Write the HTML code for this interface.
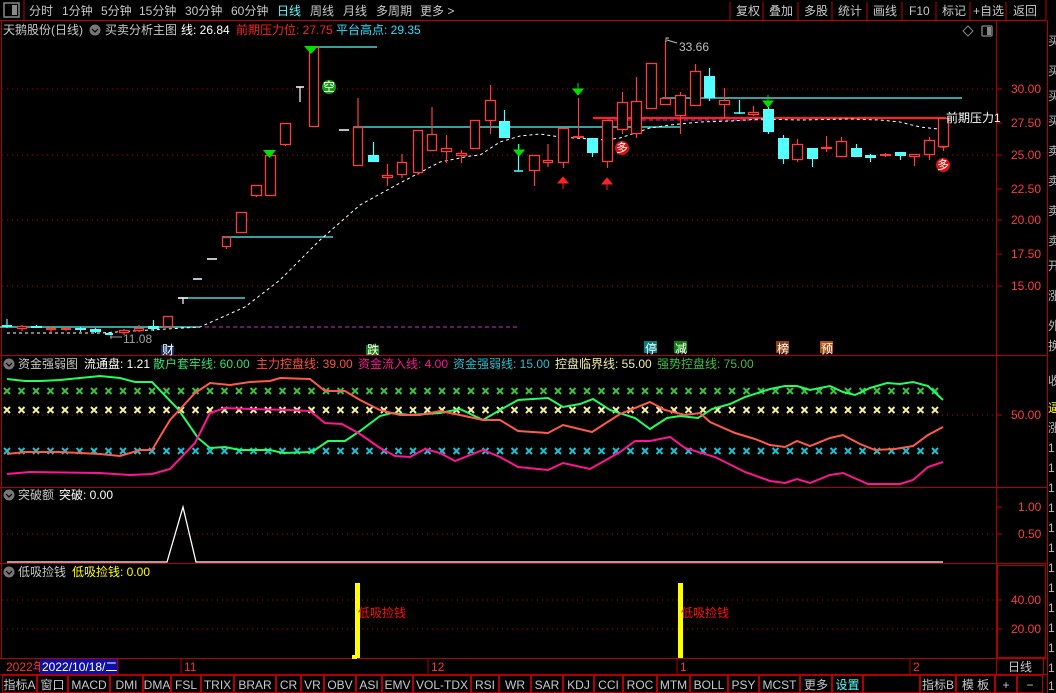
<!DOCTYPE html>
<html><head><meta charset="utf-8"><style>
body{margin:0;background:#000;width:1056px;height:693px;overflow:hidden;font-family:"Liberation Sans","Noto Sans CJK SC",sans-serif;}
svg{position:absolute;left:0;top:0}
text{font-family:"Liberation Sans","Noto Sans CJK SC",sans-serif;font-size:12px}
</style></head><body>
<svg id="s" width="1056" height="693" xmlns="http://www.w3.org/2000/svg">
<rect width="1056" height="693" fill="#000"/>
<!-- top bar -->
<rect x="4" y="3" width="15" height="14" fill="none" stroke="#888" stroke-width="1.5"/><rect x="12" y="5" width="5" height="10" fill="#888"/>
<line x1="24" y1="0" x2="24" y2="20" stroke="#c00000"/>
<g fill="#c8c8c8" font-size="12">
<text x="29" y="15">分时</text><text x="62" y="15">1分钟</text><text x="101" y="15">5分钟</text><text x="139" y="15">15分钟</text><text x="185" y="15">30分钟</text><text x="231" y="15">60分钟</text>
<text x="277" y="15" fill="#54ffff">日线</text><text x="310" y="15">周线</text><text x="343" y="15">月线</text><text x="376" y="15">多周期</text><text x="420" y="15">更多 &gt;</text>
<text x="736" y="15">复权</text><text x="769" y="15">叠加</text><text x="804" y="15">多股</text><text x="838" y="15">统计</text><text x="873" y="15">画线</text><text x="909" y="15">F10</text><text x="942" y="15">标记</text><text x="973" y="15">+自选</text><text x="1013" y="15">返回</text>
</g>
<g stroke="#c00000"><line x1="730" y1="2" x2="730" y2="20"/><line x1="763" y1="2" x2="763" y2="20"/><line x1="798" y1="2" x2="798" y2="20"/><line x1="832" y1="2" x2="832" y2="20"/><line x1="867" y1="2" x2="867" y2="20"/><line x1="902" y1="2" x2="902" y2="20"/><line x1="936" y1="2" x2="936" y2="20"/><line x1="970" y1="2" x2="970" y2="20"/><line x1="1006" y1="2" x2="1006" y2="20"/><line x1="1046" y1="0" x2="1046" y2="20"/></g>
<line x1="0" y1="20.5" x2="1046" y2="20.5" stroke="#c00000"/>
<!-- frame lines -->
<g stroke="#b00000" fill="none">
<line x1="1.5" y1="20" x2="1.5" y2="658"/>
<line x1="996.5" y1="20" x2="996.5" y2="658"/>
<line x1="1047.5" y1="20" x2="1047.5" y2="693"/>
<line x1="0" y1="355.5" x2="1047" y2="355.5"/>
<line x1="0" y1="487.5" x2="1047" y2="487.5"/>
<line x1="0" y1="563.5" x2="1047" y2="563.5"/>
<line x1="0" y1="658.5" x2="1047" y2="658.5"/>
<line x1="0" y1="674.5" x2="1047" y2="674.5"/>
<rect x="997.5" y="565.5" width="48" height="92"/>
</g>
<!-- dotted grids -->
<g stroke="#c00000" stroke-dasharray="1,4">
<line x1="2" y1="89" x2="996" y2="89"/><line x1="2" y1="155" x2="996" y2="155"/><line x1="2" y1="220" x2="996" y2="220"/><line x1="2" y1="286" x2="996" y2="286"/>
<line x1="2" y1="415" x2="996" y2="415"/><line x1="2" y1="534" x2="996" y2="534"/><line x1="2" y1="600" x2="996" y2="600"/><line x1="2" y1="629" x2="996" y2="629"/>
</g>
<g stroke="#c00000"><line x1="996" y1="89" x2="1002" y2="89"/><line x1="996" y1="123" x2="1002" y2="123"/><line x1="996" y1="155" x2="1002" y2="155"/><line x1="996" y1="189" x2="1002" y2="189"/><line x1="996" y1="220" x2="1002" y2="220"/><line x1="996" y1="254" x2="1002" y2="254"/><line x1="996" y1="286" x2="1002" y2="286"/><line x1="996" y1="415" x2="1002" y2="415"/><line x1="996" y1="507" x2="1002" y2="507"/><line x1="996" y1="534" x2="1002" y2="534"/><line x1="996" y1="600" x2="1002" y2="600"/><line x1="996" y1="629" x2="1002" y2="629"/></g>
<g fill="#ff3c3c" font-size="12">
<text x="1011" y="93">30.00</text><text x="1011" y="127">27.50</text><text x="1011" y="159">25.00</text><text x="1011" y="193">22.50</text><text x="1011" y="224">20.00</text><text x="1011" y="258">17.50</text><text x="1011" y="290">15.00</text>
<text x="1011" y="419">50.00</text><text x="1018" y="511">1.00</text><text x="1018" y="538">0.50</text><text x="1011" y="604">40.00</text><text x="1011" y="633">20.00</text>
</g>
<!-- right strip -->
<g fill="#bbb" font-size="11"><text x="1048" y="45">买</text><text x="1048" y="75">买</text><text x="1048" y="100">买</text><text x="1048" y="125">买</text><text x="1048" y="155">卖</text><text x="1048" y="185">卖</text><text x="1048" y="215">卖</text><text x="1048" y="245">卖</text><text x="1048" y="270">开</text><text x="1048" y="300">涨</text><text x="1048" y="330">外</text><text x="1048" y="350">换</text><text x="1048" y="385">收</text><text x="1048" y="412" fill="#ffff00">逼</text><text x="1048" y="432">涨</text>
<text x="1048" y="452">1</text><text x="1048" y="472">1</text><text x="1048" y="492">1</text><text x="1048" y="512">1</text><text x="1048" y="532">1</text><text x="1048" y="552">1</text><text x="1048" y="572">1</text><text x="1048" y="592">1</text><text x="1048" y="612">1</text><text x="1048" y="632">1</text><text x="1048" y="652">1</text><text x="1048" y="672">1</text><text x="1048" y="690">1</text></g>
<!-- header main -->
<text x="3" y="34" fill="#c8c8c8">天鹅股份(日线)</text>
<circle cx="95" cy="30" r="5.5" fill="#777"/><path d="M92 29 l3 3 l3 -3" stroke="#000" fill="none" stroke-width="1.3"/>
<text x="105" y="34" fill="#c8c8c8">买卖分析主图</text><text x="181" y="34" fill="#fff">线: 26.84</text>
<text x="236" y="34" fill="#ff2020">前期压力位: 27.75</text><text x="336" y="34" fill="#20e0ff">平台高点: 29.35</text>
<path d="M968 26 l5 5 l-5 5 l-5 -5z" fill="none" stroke="#888"/>
<rect x="982" y="26" width="10" height="10" fill="none" stroke="#888" stroke-width="1.3" rx="1"/><rect x="987" y="27" width="4" height="8" fill="#888"/>
<!-- lines main -->
<g stroke="#54ffff" stroke-width="1.2">
<line x1="0" y1="327" x2="200" y2="327"/><line x1="178" y1="298" x2="245" y2="298"/><line x1="222" y1="237" x2="333" y2="237"/><line x1="309" y1="47" x2="377" y2="47"/><line x1="353" y1="127" x2="680" y2="127"/><line x1="662" y1="98" x2="962" y2="98"/>
</g>
<line x1="205" y1="327" x2="520" y2="327" stroke="#e020e0" stroke-dasharray="4,3"/>
<line x1="607" y1="120" x2="767" y2="120" stroke="#e020e0" stroke-dasharray="4,3"/>
<line x1="593" y1="118" x2="946" y2="118" stroke="#ff2020" stroke-width="2.2"/>
<path d="M946 118 V147 H940" stroke="#ff2020" fill="none" stroke-width="1.5"/>
<polyline fill="none" stroke="#fff" stroke-dasharray="3,3" points="7,333 100,333 200,327 245,307 280,280 320,240 360,205 400,183 440,162 470,156 480,155 500,142 520,136 540,134 560,137 590,139 605,140 620,138 650,128 670,125 700,122 730,121 760,119 800,120 850,119 880,120 900,122 920,127 938,129"/>
<g id="candles"></g>
<!-- markers -->
<g fill="#00e000"><path d="M304 46 h14 l-7 8z"/><path d="M263 150 h13 l-6.5 8z"/></g>
<g fill="#00e000" stroke="#00e000"><line x1="519" y1="144" x2="519" y2="152"/><path d="M514 150 h10 l-5 6z"/><line x1="578" y1="83" x2="578" y2="91"/><path d="M573 89 h10 l-5 6z"/><line x1="768" y1="95" x2="768" y2="103"/><path d="M763 101 h10 l-5 6z"/></g>
<g fill="#ff2020" stroke="#ff2020"><path d="M558 183 h10 l-5 -6z"/><line x1="563" y1="183" x2="563" y2="189"/><path d="M602 184 h10 l-5 -6z"/><line x1="607" y1="184" x2="607" y2="190"/></g>
<circle cx="329" cy="87" r="7" fill="#10a010"/><text x="323" y="91" fill="#fff" font-size="11">空</text>
<circle cx="622" cy="148" r="7" fill="#e01010"/><text x="616" y="152" fill="#fff" font-size="11">多</text>
<circle cx="943" cy="165" r="7" fill="#e01010"/><text x="937" y="169" fill="#fff" font-size="11">多</text>
<text x="679" y="51" fill="#c0c0c0">33.66</text><path d="M666 42 v-4 h3 M667 40 l10 3" stroke="#c0c0c0" fill="none"/>
<text x="123" y="343" fill="#a0a0a0">11.08</text><path d="M110 337 h12 M111 335 v4" stroke="#a0a0a0"/>
<text x="946" y="122" fill="#fff">前期压力1</text>
<g font-size="11" fill="#fff">
<rect x="161" y="345" width="13" height="10" fill="#103060"/><text x="162" y="354">财</text>
<rect x="366" y="345" width="13" height="10" fill="#108010"/><text x="367" y="354">跌</text>
<rect x="644" y="341" width="13" height="12" fill="#008080"/><text x="645" y="353">停</text>
<rect x="674" y="341" width="13" height="12" fill="#108010"/><text x="675" y="353">减</text>
<rect x="776" y="341" width="13" height="12" fill="#904010"/><text x="777" y="353">榜</text>
<rect x="820" y="341" width="13" height="12" fill="#b05010"/><text x="821" y="353">预</text>
</g>
<!-- indicator 1 -->
<circle cx="9" cy="364" r="5.5" fill="#777"/><path d="M6 363 l3 3 l3 -3" stroke="#000" fill="none" stroke-width="1.3"/>
<text x="18" y="368" fill="#c8c8c8">资金强弱图</text><text x="84" y="368" fill="#fff">流通盘: 1.21</text>
<text x="153" y="368" fill="#30e070">散户套牢线: 60.00</text><text x="256" y="368" fill="#ff5040">主力控盘线: 39.00</text><text x="358" y="368" fill="#ff1493">资金流入线: 4.00</text>
<text x="453" y="368" fill="#20c0d0">资金强弱线: 15.00</text><text x="555" y="368" fill="#f0f0a0">控盘临界线: 55.00</text><text x="657" y="368" fill="#40c040">强势控盘线: 75.00</text>
<g id="xs"></g>
<polyline fill="none" stroke="#20ff60" stroke-width="2" points="7,379 25,381 40,381 60,380 100,376 120,378 135,382 152,382 178,409 198,438 210,448 225,447 240,450 270,450 283,453 312,452 328,441 345,441 360,431 380,416 392,413 410,415 440,413 460,409 483,420 500,410 518,400 548,398 563,407 580,404 593,399 610,410 635,418 650,429 667,418 680,416 698,418 712,409 730,404 745,397 770,389 785,386 797,386 810,390 830,386 843,392 855,395 870,388 887,383 900,384 913,382 928,386 943,400"/>
<polyline fill="none" stroke="#ff5a4a" stroke-width="2" points="7,454 25,452 60,452 100,454 120,456 140,450 152,450 170,420 195,393 210,383 230,385 250,382 270,381 280,378 310,379 325,391 345,391 360,400 380,410 400,415 420,415 440,411 460,415 483,420 500,420 518,431 548,433 563,425 592,432 620,414 650,402 665,410 685,415 700,413 710,422 735,433 755,439 770,445 785,447 797,441 810,446 830,438 843,435 860,444 875,450 895,449 913,446 928,435 943,427"/>
<polyline fill="none" stroke="#ff1493" stroke-width="2" points="7,474 30,472 100,473 130,475 152,474 170,469 195,443 210,413 225,408 250,409 290,410 310,411 325,423 342,424 360,434 380,448 395,456 410,457 425,449 440,453 455,461 483,450 500,457 518,467 548,470 563,463 590,469 620,452 635,441 650,441 670,437 685,448 715,457 745,472 770,481 785,483 797,479 810,483 830,475 843,473 868,484 900,484 913,480 928,467 943,462"/>
<!-- indicator 2 -->
<circle cx="9" cy="495" r="5.5" fill="#777"/><path d="M6 494 l3 3 l3 -3" stroke="#000" fill="none" stroke-width="1.3"/>
<text x="18" y="499" fill="#c8c8c8">突破额</text><text x="59" y="499" fill="#fff">突破: 0.00</text>
<polyline fill="none" stroke="#fff" stroke-width="1.3" points="7,562 167,562 183,507 196,562 943,562"/>
<!-- indicator 3 -->
<circle cx="9" cy="572" r="5.5" fill="#777"/><path d="M6 571 l3 3 l3 -3" stroke="#000" fill="none" stroke-width="1.3"/>
<text x="18" y="576" fill="#c8c8c8">低吸捡钱</text><text x="72" y="576" fill="#ffff00">低吸捡钱: 0.00</text>
<rect x="355" y="583" width="5" height="75" fill="#ffff00"/><rect x="678" y="583" width="5" height="75" fill="#ffff00"/>
<text x="358" y="617" fill="#ff1010">低吸捡钱</text><text x="681" y="617" fill="#ff1010">低吸捡钱</text>
<!-- date axis -->
<text x="6" y="671" fill="#ff3030">2022年</text>
<rect x="40" y="659" width="78" height="15" fill="#1010a0"/><text x="42" y="671" fill="#fff">2022/10/18/二</text>
<g stroke="#b00000"><line x1="118" y1="659" x2="118" y2="674"/><line x1="181" y1="659" x2="181" y2="674"/><line x1="428" y1="659" x2="428" y2="674"/><line x1="677" y1="659" x2="677" y2="674"/><line x1="910" y1="659" x2="910" y2="674"/></g>
<g fill="#ff3030"><text x="184" y="671">11</text><text x="431" y="671">12</text><text x="680" y="671">1</text><text x="913" y="671">2</text></g>
<rect x="352" y="655" width="5" height="4" fill="#ffff00"/>
<rect x="996.5" y="658.5" width="47" height="16" fill="none" stroke="#b00000"/><text x="1008" y="671" fill="#c8c8c8">日线</text>
<!-- toolbar -->
<g id="tb" font-size="12" fill="#c8c8c8"></g>
</svg>
<script>
var NS="http://www.w3.org/2000/svg";
function el(p,t,a){var e=document.createElementNS(NS,t);for(var k in a)e.setAttribute(k,a[k]);p.appendChild(e);return e;}
var C=[[2,12,325,327,319,328,'c'],[17,27,326,329,325,331,'r'],[31,42,326,327,325,328,'c'],[46,56,328,330,327,332,'r'],[61,71,328,329,327,331,'R'],[75,86,328,330,327,332,'c'],[90,101,329,332,328,333,'c'],[105,113,333,334,332,335,'c'],[119,129,330,333,329,335,'r'],[134,144,328,331,325,332,'r'],[148,159,326,329,320,331,'c'],[163,173,316,327,316,327,'r'],[178,188,298,298,298,304,'w'],[193,202,279,279,279,279,'w'],[207,217,259,259,259,259,'w'],[222,231,237,247,237,249,'r'],[236,247,212,233,212,233,'r'],[251,262,185,196,185,197,'r'],[265,276,155,196,155,196,'r'],[280,291,123,145,123,146,'r'],[296,304,87,87,87,102,'w'],[309,319,47,127,47,127,'r'],[339,349,130,130,130,130,'w'],[353,363,127,166,98,166,'r'],[368,379,155,162,142,162,'c'],[382,393,175,178,164,186,'r'],[397,407,162,175,154,178,'r'],[413,423,130,173,130,175,'r'],[427,437,134,151,107,151,'r'],[441,452,148,152,135,163,'r'],[456,467,153,156,150,163,'r'],[470,480,120,149,120,149,'r'],[485,496,100,121,85,134,'r'],[499,510,121,138,110,138,'c'],[514,523,171,171,144,171,'cd'],[529,540,155,171,155,186,'r'],[543,553,160,163,144,167,'r'],[558,569,128,163,128,168,'r'],[573,584,136,138,98,138,'R'],[587,598,138,153,138,157,'c'],[602,613,120,162,120,168,'r'],[617,628,102,130,92,134,'r'],[631,642,101,134,77,138,'r'],[646,657,63,109,63,109,'r'],[660,671,98,105,41,105,'r'],[675,686,95,116,92,134,'r'],[690,701,71,106,64,106,'r'],[704,715,76,98,68,101,'c'],[719,730,100,105,88,118,'r'],[734,745,113,113,100,114,'cd'],[748,759,112,115,106,116,'r'],[763,774,109,132,107,134,'c'],[778,789,138,159,135,164,'c'],[792,803,144,160,139,162,'r'],[807,818,148,159,148,167,'c'],[821,832,147,149,136,152,'r'],[836,847,141,157,137,157,'r'],[851,862,148,157,144,157,'c'],[865,876,155,158,154,162,'c'],[880,891,154,156,153,157,'R'],[895,906,152,156,152,160,'c'],[909,920,154,157,154,166,'r'],[924,935,140,155,137,160,'r'],[938,949,118,147,118,151,'r']];
var g=document.getElementById('candles');
C.forEach(function(c){var x1=c[0],x2=c[1],t=c[2],b=c[3],wt=c[4],wb=c[5],k=c[6],m=(x1+x2)/2;
var col=(k=='r'||k=='R')?'#ff3c3c':(k=='w'?'#ffffff':'#54ffff');
el(g,'line',{x1:m,y1:wt,x2:m,y2:wb,stroke:col,'stroke-width':1.2});
if(k=='r')el(g,'rect',{x:x1+.5,y:t+.5,width:x2-x1-1,height:Math.max(b-t-1,1),fill:'#000',stroke:col,'stroke-width':1.3});
else if(k=='w'||k=='cd')el(g,'line',{x1:x1,y1:t,x2:x2,y2:t,stroke:col,'stroke-width':1.5});
else el(g,'rect',{x:x1,y:t,width:x2-x1,height:Math.max(b-t,2),fill:col});
});
var xs=document.getElementById('xs');
[[391,'#40c040'],[410,'#f0f0a0'],[451,'#20c0d0']].forEach(function(r){for(var x=7;x<=945;x+=14.5){var y=r[0];el(xs,'path',{d:'M'+(x-3)+' '+(y-3)+'L'+(x+3)+' '+(y+3)+'M'+(x+3)+' '+(y-3)+'L'+(x-3)+' '+(y+3),stroke:r[1],'stroke-width':2});}});
var tb=document.getElementById('tb');
var T=[['指标A',2,37],['窗口',37,68],['MACD',68,110],['DMI',110,143],['DMA',143,171],['FSL',171,201],['TRIX',201,234],['BRAR',234,276],['CR',276,301],['VR',301,324],['OBV',324,356],['ASI',356,382],['EMV',382,413],['VOL-TDX',413,471],['RSI',471,499],['WR',499,531],['SAR',531,563],['KDJ',563,594],['CCI',594,623],['ROC',623,657],['MTM',657,690],['BOLL',690,728],['PSY',728,759],['MCST',759,800],['更多',800,832],['设置',832,863],['',863,920],['指标B',920,956],['模 板',956,995],['+',995,1017],['−',1017,1043]];
T.forEach(function(t){el(tb,'rect',{x:t[1]+.5,y:675.5,width:t[2]-t[1]-1,height:17,fill:'none',stroke:'#b00000'});var e=el(tb,'text',{x:(t[1]+t[2])/2,y:689,'text-anchor':'middle',fill:t[0]=='设置'?'#54ffff':'#c8c8c8'});e.textContent=t[0];});
</script>
</body></html>
